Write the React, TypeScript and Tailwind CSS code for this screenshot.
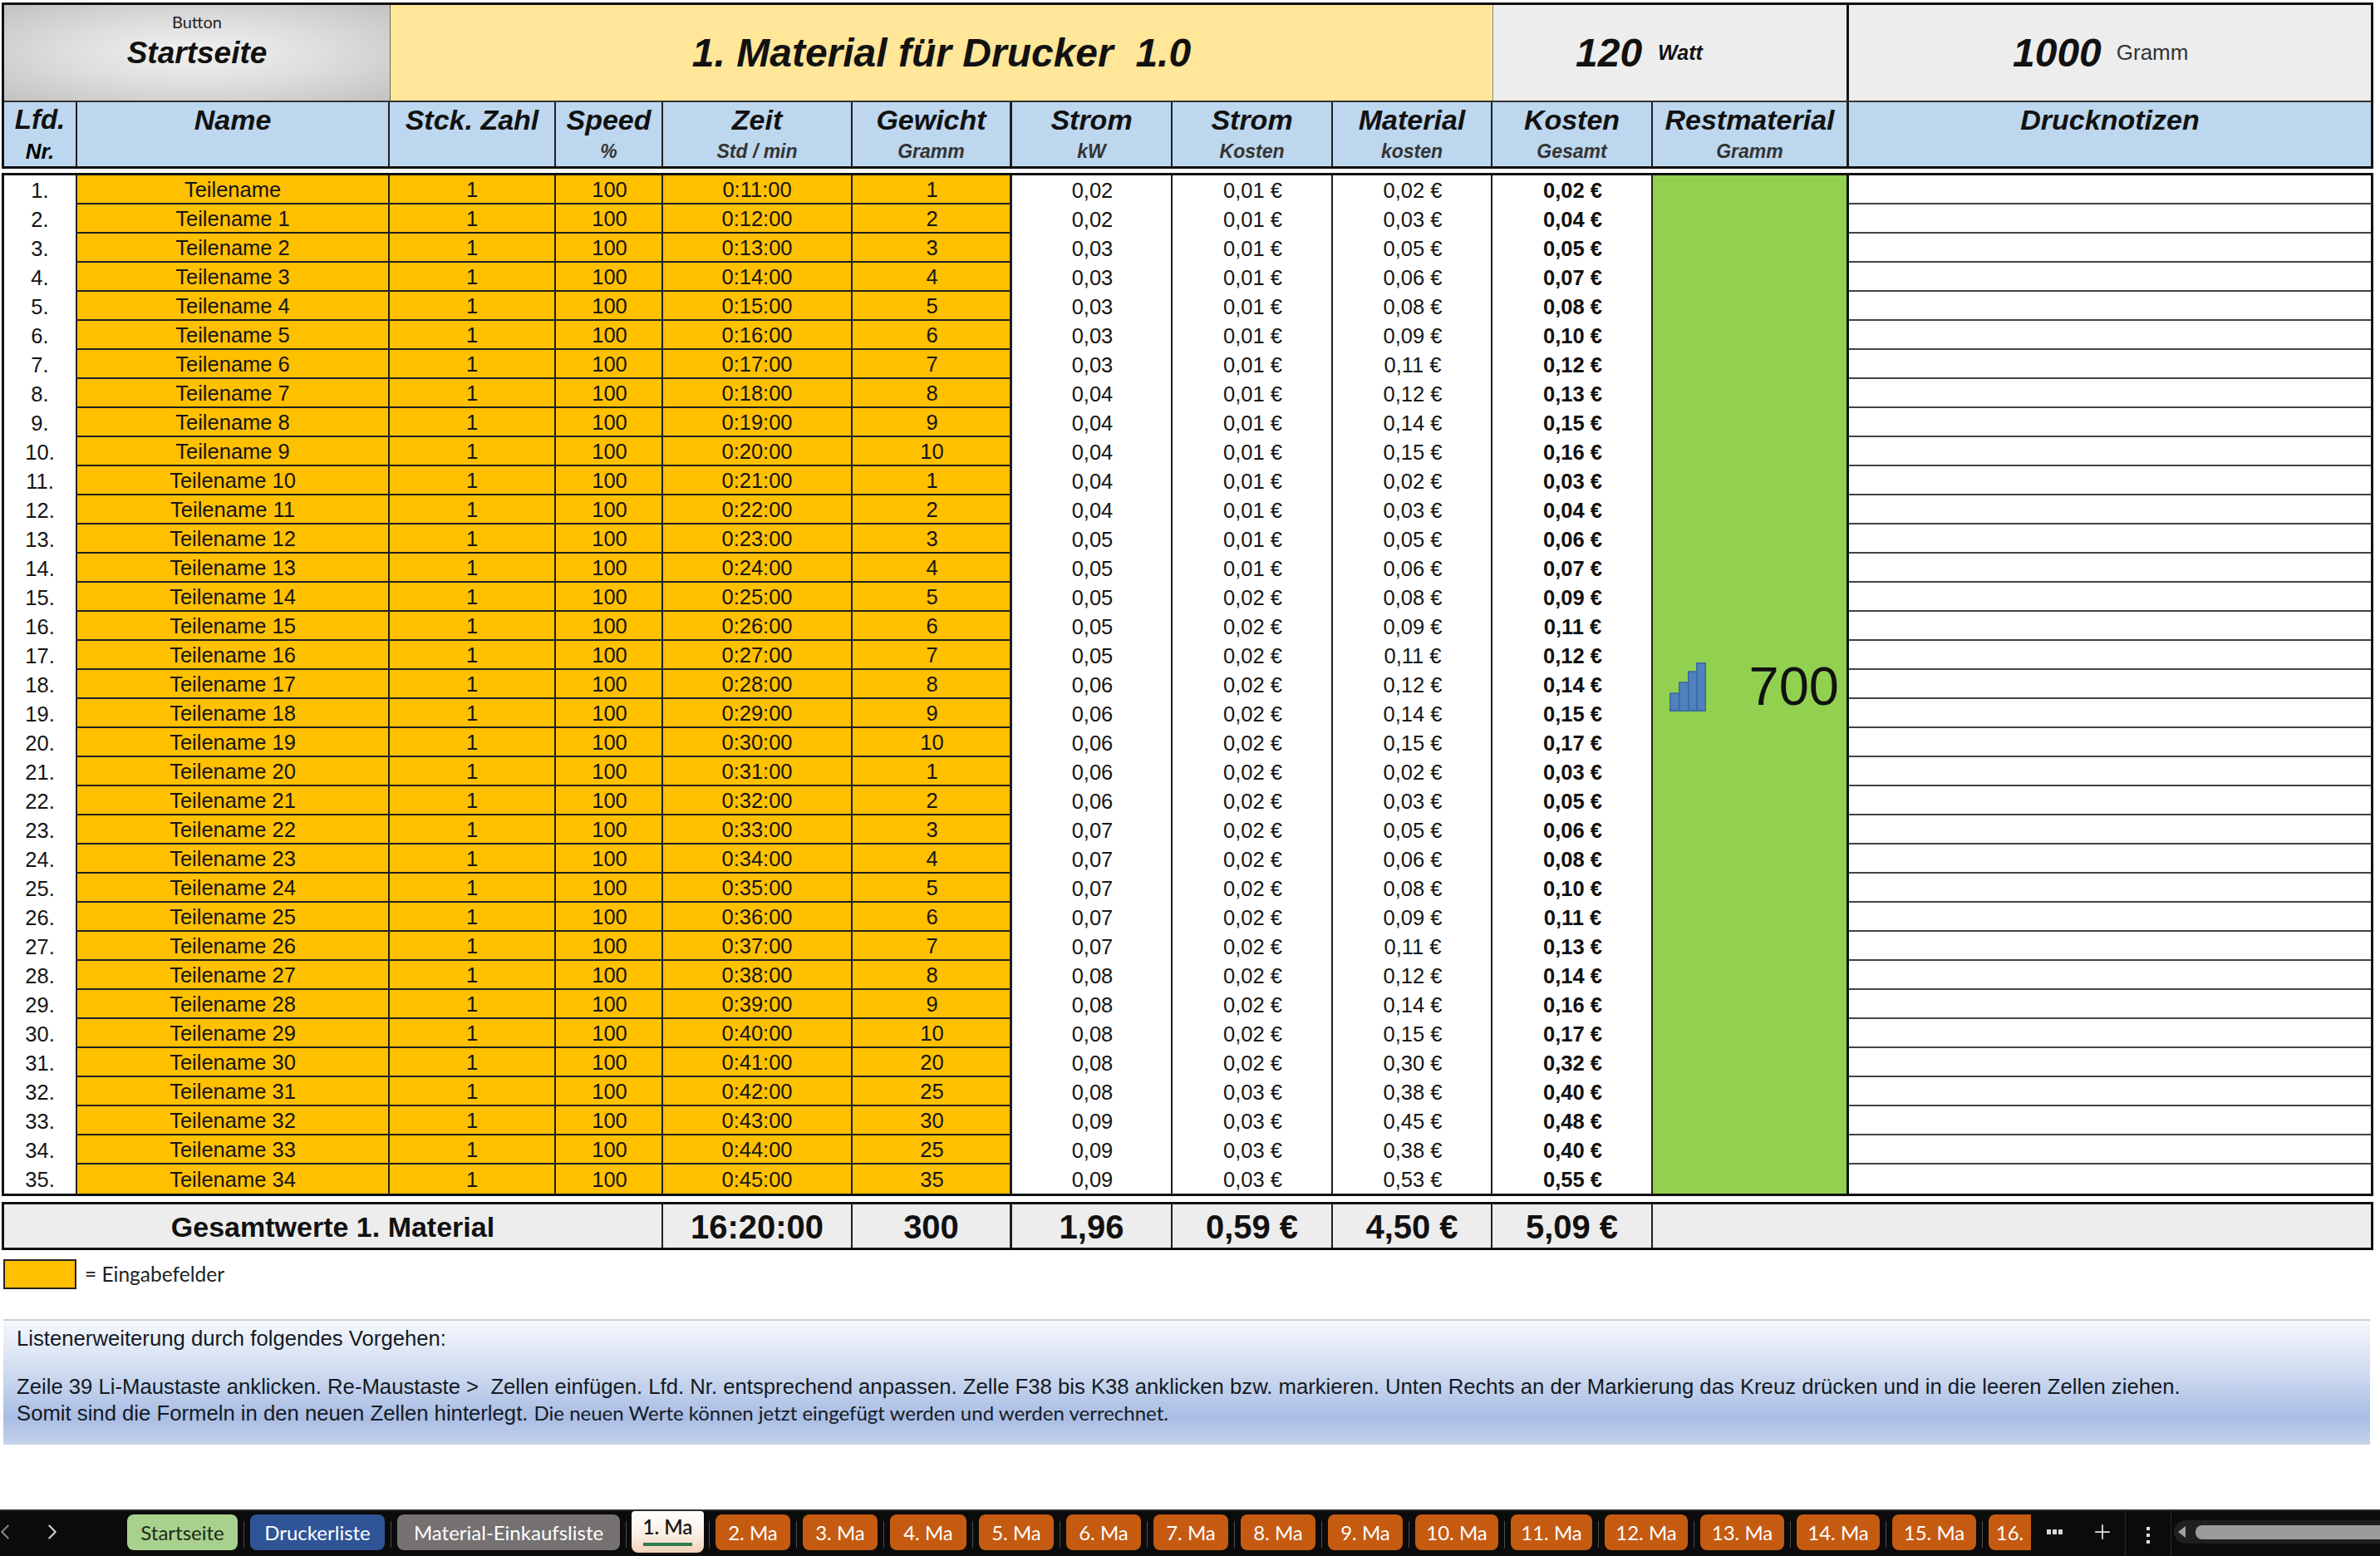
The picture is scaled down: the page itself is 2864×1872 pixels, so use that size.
import React from 'react';
import { ChevronLeft, ChevronRight, Plus } from 'lucide-react';

const COLS = 'grid-cols-[88px_376px_200px_129px_228px_192px_193px_193px_192px_193px_236px_628px]';

const GEWICHT = [
  1, 2, 3, 4, 5, 6, 7, 8, 9, 10, 1, 2, 3, 4, 5, 6, 7, 8, 9, 10, 1, 2, 3, 4, 5, 6, 7, 8, 9, 10, 20, 25, 30, 25, 35,
];
const GESAMT = [
  2, 4, 5, 7, 8, 10, 12, 13, 15, 16, 3, 4, 6, 7, 9, 11, 12, 14, 15, 17, 3, 5, 6, 8, 10, 11, 13, 14, 16, 17, 32, 40, 48, 40, 55,
];

const cents = (n: number) => `0,${String(n).padStart(2, '0')}`;

const rows = GEWICHT.map((g, i) => {
  const min = 11 + i;
  return {
    nr: `${i + 1}.`,
    name: i === 0 ? 'Teilename' : `Teilename ${i}`,
    zeit: `0:${min}:00`,
    gewicht: g,
    kw: cents(Math.round((min * 2) / 10)),
    stromKosten: cents(Math.round((min * 6) / 100)),
    material: cents(Math.round(g * 1.5)),
    gesamt: cents(GESAMT[i]),
  };
});

const headers = [
  { title: 'Lfd.', sub: 'Nr.', cls: 'border-r-2', titleCls: 'text-[33px]', subCls: 'text-[26px] text-black' },
  { title: 'Name', cls: 'border-r-2' },
  { title: 'Stck. Zahl', cls: 'border-r-2' },
  { title: 'Speed', sub: '%', cls: 'border-r-2' },
  { title: 'Zeit', sub: 'Std / min', cls: 'border-r-2' },
  { title: 'Gewicht', sub: 'Gramm', cls: 'border-r-[3px]' },
  { title: 'Strom', sub: 'kW', cls: 'border-r-2' },
  { title: 'Strom', sub: 'Kosten', cls: 'border-r-2' },
  { title: 'Material', sub: 'kosten', cls: 'border-r-2' },
  { title: 'Kosten', sub: 'Gesamt', cls: 'border-r-2' },
  { title: 'Restmaterial', sub: 'Gramm', cls: 'border-r-[3px]' },
  { title: 'Drucknotizen', cls: '' },
];

const tabs = [
  { label: 'Startseite', w: 'w-[133px]', cls: 'bg-[#a9d18e] text-[#1c2a14] rounded-[8px]' },
  { label: 'Druckerliste', w: 'w-[162px]', cls: 'bg-[#2f5597] text-white rounded-[8px]' },
  { label: 'Material-Einkaufsliste', w: 'w-[268px]', cls: 'bg-[#767171] text-white rounded-[8px]' },
  { label: '1. Ma', w: 'w-[87px]', active: true },
  { label: '2. Ma', w: 'w-[90px]' },
  { label: '3. Ma', w: 'w-[90px]' },
  { label: '4. Ma', w: 'w-[92px]' },
  { label: '5. Ma', w: 'w-[90px]' },
  { label: '6. Ma', w: 'w-[90px]' },
  { label: '7. Ma', w: 'w-[90px]' },
  { label: '8. Ma', w: 'w-[90px]' },
  { label: '9. Ma', w: 'w-[90px]' },
  { label: '10. Ma', w: 'w-[100px]' },
  { label: '11. Ma', w: 'w-[98px]' },
  { label: '12. Ma', w: 'w-[100px]' },
  { label: '13. Ma', w: 'w-[101px]' },
  { label: '14. Ma', w: 'w-[100px]' },
  { label: '15. Ma', w: 'w-[101px]' },
  { label: '16.', w: 'w-[51px]', cls: 'bg-[#c55a11] text-white rounded-l-[8px]' },
];

const Cell: React.FC<{ className?: string; children?: React.ReactNode }> = ({ className = '', children }) => (
  <div className={`flex items-center justify-center overflow-hidden whitespace-nowrap border-[#1f1f1f] ${className}`}>{children}</div>
);

const Header = () => (
  <div className="ml-[2px] mt-[3px] w-[2854px] border-[3px] border-[#111]">
    <div className={`grid ${COLS} h-[117px] border-b-2 border-[#333]`}>
      <div className="col-span-2 relative flex items-center justify-center bg-[radial-gradient(ellipse_at_center,#f1f1f1_0%,#dfdfdf_45%,#c2c2c2_100%)]">
        <span className="absolute top-[8px] left-0 right-0 text-center text-[20px] leading-[24px] text-[#222] [font-family:Lato,sans-serif]">Button</span>
        <span className="text-[37px] font-bold italic text-[#111]">Startseite</span>
      </div>
      <div className="col-span-7 flex items-center justify-center bg-[#ffe699] border-l border-[#666]">
        <span className="text-[48px] font-bold italic text-[#111] whitespace-pre">1. Material für Drucker  1.0</span>
      </div>
      <div className="col-span-2 flex items-center bg-[#ededed] border-l border-[#888] border-r-[3px] border-r-[#111] pl-[99px]">
        <span className="text-[48px] font-bold italic text-[#111]">120</span>
        <span className="ml-[19px] text-[25px] font-bold italic text-[#111]">Watt</span>
      </div>
      <div className="flex items-center bg-[#ededed] pl-[197px]">
        <span className="text-[48px] font-bold italic text-[#111]">1000</span>
        <span className="ml-[18px] text-[26px] text-[#333]">Gramm</span>
      </div>
    </div>
    <div className={`grid ${COLS} h-[77px]`}>
      {headers.map((h, i) => (
        <div key={i} className={`flex flex-col items-center bg-[#bdd7ee] border-[#1f1f1f] ${h.cls}`}>
          <span className={`mt-[1px] h-[40px] leading-[40px] font-bold italic text-[#111] whitespace-nowrap ${h.titleCls ?? 'text-[34px]'}`}>{h.title}</span>
          {h.sub && (
            <span className={`mt-[5px] h-[26px] leading-[26px] font-bold italic whitespace-nowrap ${h.subCls ?? 'text-[23px] text-[#333]'}`}>{h.sub}</span>
          )}
        </div>
      ))}
    </div>
  </div>
);

const DataTable = () => (
  <div className="ml-[2px] mt-[5px] w-[2854px] border-[3px] border-[#111] text-[25.5px] text-[#151515]">
    <div className={`grid ${COLS} grid-rows-[repeat(35,35px)]`}>
      <div className="col-[11] row-[1/36] flex items-center justify-between bg-[#92d050] border-r-[3px] border-[#111] pl-[20px] pr-[9px] pt-[3px]">
        <svg width="44" height="59" viewBox="0 0 44 59" className="mt-[2px]">
          <g fill="#4f81bd" stroke="#38689f" strokeWidth="1.5">
            <rect x="0.75" y="37" width="11" height="21.25" />
            <rect x="11.75" y="24" width="11" height="34.25" />
            <rect x="22.75" y="11" width="11" height="47.25" />
            <rect x="32.75" y="0.75" width="10.5" height="57.5" />
          </g>
        </svg>
        <span className="text-[65px] leading-none text-[#111]">700</span>
      </div>
      {rows.map((r, i) => {
        const line = i < rows.length - 1 ? 'border-b-2' : '';
        return (
          <React.Fragment key={r.nr}>
            <Cell className="bg-white border-r-2 pt-[2px]">{r.nr}</Cell>
            <Cell className={`bg-[#ffc000] border-r-2 pt-[2px] ${line}`}>{r.name}</Cell>
            <Cell className={`bg-[#ffc000] border-r-2 pt-[2px] ${line}`}>1</Cell>
            <Cell className={`bg-[#ffc000] border-r-2 pt-[2px] pl-[2px] ${line}`}>100</Cell>
            <Cell className={`bg-[#ffc000] border-r-2 pt-[2px] ${line}`}>{r.zeit}</Cell>
            <Cell className={`bg-[#ffc000] border-r-[3px] pt-[2px] pl-[2px] ${line}`}>{r.gewicht}</Cell>
            <Cell className="bg-white border-r-2 pt-[2px] pl-[2px]">{r.kw}</Cell>
            <Cell className="bg-white border-r-2 pt-[2px] pl-[2px]">{r.stromKosten} €</Cell>
            <Cell className="bg-white border-r-2 pt-[2px] pl-[2px]">{r.material} €</Cell>
            <Cell className="bg-white border-r-2 pt-[2px] pl-[2px] font-bold text-[#111]">{r.gesamt} €</Cell>
            <Cell className={`bg-white ${line} border-[#444]`} />
          </React.Fragment>
        );
      })}
    </div>
  </div>
);

const Summary = () => (
  <div className={`ml-[2px] mt-[7px] w-[2854px] h-[58px] border-[3px] border-[#111] bg-[#ededed] grid ${COLS} font-bold text-[40px] text-[#111]`}>
    <Cell className="col-span-4 border-r-2 text-[34px] pt-[2px]">Gesamtwerte 1. Material</Cell>
    <Cell className="border-r-2 pt-[2px]">16:20:00</Cell>
    <Cell className="border-r-[3px] pt-[2px]">300</Cell>
    <Cell className="border-r-2 pt-[2px]">1,96</Cell>
    <Cell className="border-r-2 pt-[2px]">0,59 €</Cell>
    <Cell className="border-r-2 pt-[2px]">4,50 €</Cell>
    <Cell className="border-r-2 pt-[2px]">5,09 €</Cell>
    <div className="col-span-2" />
  </div>
);

const Note = () => (
  <div className="ml-[4px] mt-[35px] w-[2848px] h-[151px] border-t-2 border-[#cfcfcf] pl-[16px] pt-[5px] text-[25.7px] leading-[32px] text-[#141a24] bg-[linear-gradient(180deg,#f6f8fd_0%,#d0dcf0_40%,#a9bde4_78%,#c5d3ea_100%)]">
    <div>Listenerweiterung durch folgendes Vorgehen:</div>
    <div className="mt-[26px] whitespace-pre">
      Zeile 39 Li-Maustaste anklicken. Re-Maustaste &gt;  Zellen einfügen. Lfd. Nr. entsprechend anpassen. Zelle F38 bis K38 anklicken bzw. markieren. Unten Rechts an der Markierung das Kreuz drücken und in die leeren Zellen ziehen.
    </div>
    <div className="whitespace-pre">
      Somit sind die Formeln in den neuen Zellen hinterlegt. <span className="text-[24px] [font-family:Lato,sans-serif]">Die neuen Werte können jetzt eingefügt werden und werden verrechnet.</span>
    </div>
  </div>
);

const TabBar = () => (
  <div className="mt-auto h-[56px] flex items-stretch bg-[#0b0b0b] border-t-2 border-[#2e2e2e] text-[24px] [font-family:Lato,sans-serif]">
    <div className="w-[153px] shrink-0 relative flex items-center">
      <ChevronLeft size={30} strokeWidth={1.5} className="absolute left-[-9px] top-[10px] text-[#888]" />
      <ChevronRight size={30} strokeWidth={1.5} className="absolute left-[48px] top-[10px] text-[#d8d8d8]" />
    </div>
    <div className="w-[2293px] shrink-0 overflow-hidden flex items-start">
      {tabs.map((t, i) => (
        <React.Fragment key={t.label}>
          {i > 0 && (
            <div className="w-[15px] shrink-0 flex justify-center pt-[12px]">
              <div className="w-px h-[32px] bg-[#4d4d4d]" />
            </div>
          )}
          {t.active ? (
            <div className={`${t.w} h-[50px] shrink-0 -ml-[1px] -mr-[1px] box-content rounded-b-[8px] rounded-t-[4px] flex flex-col items-center text-[#1a1a1a] font-semibold bg-[linear-gradient(180deg,#ffffff_0%,#fbeee4_55%,#f2d2bb_100%)]`}>
              <span className="mt-[2px] leading-[34px]">{t.label}</span>
              <div className="mt-[2px] w-[59px] h-[4px] bg-[#2e7d4a]" />
            </div>
          ) : (
            <div className={`${t.w} h-[43px] mt-[4px] shrink-0 flex items-center justify-center overflow-hidden whitespace-nowrap ${t.cls ?? 'bg-[#c55a11] text-white rounded-[8px]'}`}>
              {t.label}
            </div>
          )}
        </React.Fragment>
      ))}
    </div>
    <div className="w-[112px] shrink-0 relative flex items-center border-r border-[#2a2a2a]">
      <div className="absolute left-[17px] top-[22px] flex gap-[2px]">
        <span className="w-[5px] h-[6px] bg-[#d8d8d8]" />
        <span className="w-[5px] h-[6px] bg-[#d8d8d8]" />
        <span className="w-[5px] h-[6px] bg-[#d8d8d8]" />
      </div>
      <Plus size={28} strokeWidth={1.5} className="absolute left-[70px] top-[11px] text-[#e0e0e0]" />
    </div>
    <div className="w-[55px] shrink-0 flex flex-col items-center pt-[19px] gap-[4px] border-r border-[#2a2a2a]">
      <span className="w-[4px] h-[4px] bg-[#e0e0e0]" />
      <span className="w-[4px] h-[4px] bg-[#e0e0e0]" />
      <span className="w-[4px] h-[4px] bg-[#e0e0e0]" />
    </div>
    <div className="flex-1 mt-[11px] ml-[3px] h-[28px] rounded-l-[14px] bg-[#1f1f1f] flex items-center pl-[5px]">
      <span className="w-0 h-0 border-y-[7px] border-y-transparent border-r-[9px] border-r-[#a0a0a0]" />
      <div className="ml-[12px] flex-1 h-[17px] rounded-l-[8px] bg-[#9b9b9b]" />
    </div>
  </div>
);

export default function App() {
  return (
    <div className="w-[2864px] h-[1872px] flex flex-col overflow-hidden bg-white [font-family:'Liberation_Sans',Arial,sans-serif]">
      <Header />
      <DataTable />
      <Summary />
      <div className="ml-[4px] mt-[11px] flex items-center">
        <div className="w-[88px] h-[36px] bg-[#ffc000] border-2 border-[#222]" />
        <span className="ml-[10px] text-[24.5px] text-[#222] [font-family:Lato,sans-serif]">= Eingabefelder</span>
      </div>
      <Note />
      <TabBar />
    </div>
  );
}
